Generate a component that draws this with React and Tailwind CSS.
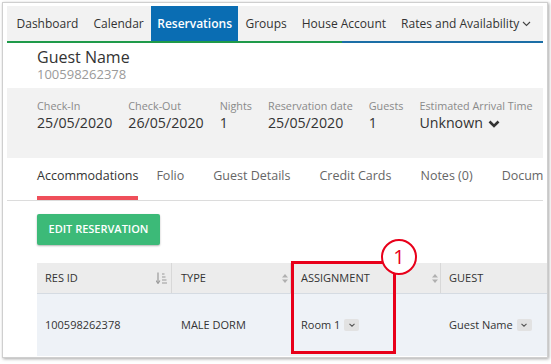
import React from "react";

function SortBoth() {
  return (
    <svg width="6" height="9" viewBox="0 0 6 9" className="shrink-0">
      <path d="M3 0 L6 3.5 L0 3.5 Z" fill="#b0b0b0" />
      <path d="M3 9 L6 5.5 L0 5.5 Z" fill="#b0b0b0" />
    </svg>
  );
}

function SortDesc() {
  return (
    <svg width="11" height="12" viewBox="0 0 11 12" className="shrink-0">
      <path d="M2 0.5 V10.5" stroke="#9a9a9a" strokeWidth="1.2" />
      <path d="M0 8.5 L2 11.5 L4 8.5" stroke="#9a9a9a" strokeWidth="1.1" fill="none" />
      <path d="M6 2 H8.5 M6 5 H9.5 M6 8 H10.5 M6 11 H11" stroke="#9a9a9a" strokeWidth="1" />
    </svg>
  );
}

function MiniDrop() {
  return (
    <span className="ml-[4px] inline-flex h-[12px] w-[15px] items-center justify-center rounded-[2px] bg-[#e2e2e2]">
      <svg width="6" height="4" viewBox="0 0 6 4">
        <path d="M0.5 0.8 L3 3.2 L5.5 0.8" stroke="#555" strokeWidth="1.1" fill="none" />
      </svg>
    </span>
  );
}

export default function App() {
  const nav = ["Dashboard", "Calendar", "Reservations", "Groups", "House Account"];
  const info = [
    ["Check-In", "25/05/2020"],
    ["Check-Out", "26/05/2020"],
    ["Nights", "1"],
    ["Reservation date", "25/05/2020"],
    ["Guests", "1"],
  ];
  return (
    <div
      className="w-[551px] h-[364px] bg-white overflow-hidden"
      style={{ fontFamily: '"Open Sans", "Liberation Sans", sans-serif' }}
    >
      <div className="ml-[2px] mt-[2px] w-[546px] h-[356px] border border-[#cfcfcf] shadow-[1px_1px_3px_rgba(0,0,0,0.35)] pl-[4px] pr-[4px] pt-[3px] overflow-hidden bg-white">
        {/* Nav */}
        <div className="flex h-[35px] bg-[#f2f2f2] pl-[2px] text-[12px] text-[#333]">
          {nav.map((n) =>
            n === "Reservations" ? (
              <div key={n} className="flex items-center bg-[#0a6db3] px-[6px] font-semibold text-white">
                {n}
              </div>
            ) : (
              <div key={n} className="flex items-center px-[7.5px]">
                {n}
              </div>
            )
          )}
          <div className="flex items-center px-[7.5px]">
            Rates and Availability
            <svg width="9" height="6" viewBox="0 0 9 6" className="ml-[3px]">
              <path d="M1 1 L4.5 4.5 L8 1" stroke="#444" strokeWidth="1.1" fill="none" />
            </svg>
          </div>
        </div>
        <div className="flex h-[2px]">
          <div className="w-[335px] bg-[#1f9a4a]" />
          <div className="flex-1 bg-[#1b6ea6]" />
        </div>

        {/* Header */}
        <div className="pl-[30px]">
          <div className="mt-[4px] text-[16px] leading-[20px] text-[#333]">Guest Name</div>
          <div className="text-[13px] leading-[15px] text-[#9a9a9a]">100598262378</div>
        </div>

        {/* Info panel */}
        <div className="mt-[6px] h-[70px] bg-[#f2f2f2] pl-[30px] pt-[11px] flex gap-[16px]">
          {info.map(([l, v]) => (
            <div key={l} className="flex flex-col">
              <div className="text-[10.8px] leading-[14px] text-[#8a8a8a]">{l}</div>
              <div className="text-[14.2px] leading-[20px] text-[#333]">{v}</div>
            </div>
          ))}
          <div className="flex flex-col">
            <div className="text-[10.8px] leading-[14px] text-[#8a8a8a]">Estimated Arrival Time</div>
            <div className="flex items-center text-[14.2px] leading-[20px] text-[#333]">
              Unknown
              <svg width="12" height="8" viewBox="0 0 12 8" className="ml-[5px] mt-[1px]">
                <path d="M1.5 1.5 L6 6 L10.5 1.5" stroke="#333" strokeWidth="2.6" fill="none" />
              </svg>
            </div>
          </div>
        </div>

        {/* Tabs */}
        <div className="mt-[10px] flex border-b border-[#dcdcdc] pl-[30px] text-[12.5px] leading-[16px] whitespace-nowrap overflow-hidden">
          <div className="border-b-4 border-[#ef4f5a] pb-[12px] text-[#333]">Accommodations</div>
          <div className="ml-[18px] pb-[16px] text-[#666]">Folio</div>
          <div className="ml-[29px] pb-[16px] text-[#666]">Guest Details</div>
          <div className="ml-[29px] pb-[16px] text-[#666]">Credit Cards</div>
          <div className="ml-[29px] pb-[16px] text-[#666]">Notes (0)</div>
          <div className="ml-[29px] pb-[16px] text-[#666]">Documents</div>
        </div>

        {/* Content */}
        <div className="pl-[30px]">
          <button className="mt-[13px] h-[31px] w-[123px] rounded-[2px] bg-[#3cba78] text-[11px] font-semibold text-white shadow-[0_1px_2px_rgba(0,0,0,0.3)]">
            EDIT RESERVATION
          </button>

          <div className="relative mt-[18px] w-[560px]">
            <div className="grid grid-cols-[135px_119px_150px_156px] h-[31px] bg-[#ececec] border-b border-[#d5dbe2] text-[11px] text-[#333]">
              <div className="flex items-center justify-between border-r border-[#d8d8d8] pl-[8px] pr-[4px]">
                <span>RES ID</span>
                <SortDesc />
              </div>
              <div className="flex items-center justify-between border-r border-[#d8d8d8] pl-[9px] pr-[2px]">
                <span>TYPE</span>
                <SortBoth />
              </div>
              <div className="flex items-center justify-between border-r border-[#d8d8d8] pl-[10px] pr-[2px]">
                <span>ASSIGNMENT</span>
                <SortBoth />
              </div>
              <div className="flex items-center pl-[8px]">
                <span>GUEST</span>
              </div>
            </div>
            <div className="grid grid-cols-[135px_119px_150px_156px] h-[62px] bg-[#eef2f7] text-[11px] text-[#333]">
              <div className="flex items-center pl-[8px]">100598262378</div>
              <div className="flex items-center pl-[9px]">MALE DORM</div>
              <div className="flex items-center pl-[10px]">
                Room 1<MiniDrop />
              </div>
              <div className="flex items-center pl-[8px]">
                Guest Name<MiniDrop />
              </div>
            </div>

            {/* Annotation */}
            <div className="absolute left-[254px] top-[-2px] h-[93px] w-[105px] border-[3px] border-[#e8001a]" />
            <div className="absolute left-[344px] top-[-24px] flex h-[36px] w-[36px] items-center justify-center rounded-full border-2 border-[#e8001a] bg-white text-[20px] leading-none text-[#e8001a]">
              1
            </div>
          </div>
        </div>
      </div>
    </div>
  );
}
